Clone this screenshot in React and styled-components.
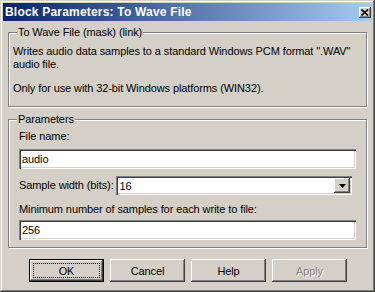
import React from 'react';
import { styled, createGlobalStyle } from 'styled-components';

const GlobalStyle = createGlobalStyle`
  * { box-sizing: border-box; }
  body {
    margin: 0;
    background: #d4d0c8;
  }
`;

const face = '#d4d0c8';
const raised = `inset -1px -1px #404040, inset 1px 1px #fff, inset -2px -2px #808080`;
const sunken = `inset 1px 1px #808080, inset 2px 2px #404040, inset -1px -1px #fff, inset -2px -2px ${face}`;

const Window = styled.div`
  width: 375px;
  height: 292px;
  padding: 3px;
  display: flex;
  flex-direction: column;
  background: ${face};
  box-shadow: inset -1px -1px #404040, inset 1px 1px ${face}, inset -2px -2px #808080, inset 2px 2px #fff;
  font: 11px 'Liberation Sans', Arial, sans-serif;
  letter-spacing: -0.1px;
  color: #000;
`;

const TitleBar = styled.div`
  height: 18px;
  display: flex;
  align-items: center;
  padding: 0 1px 0 2px;
  background: linear-gradient(to right, #0a246a, #a6caf0);
`;

const TitleText = styled.span`
  flex: 1;
  color: #fff;
  font-weight: bold;
  font-size: 12px;
  letter-spacing: 0.2px;
  white-space: nowrap;
`;

const CloseButton = styled.div`
  width: 12px;
  height: 11px;
  display: flex;
  align-items: center;
  justify-content: center;
  background: ${face};
  box-shadow: ${raised};
`;

const Content = styled.div`
  display: flex;
  flex-direction: column;
  padding: 0 5px;
`;

const Group = styled.div`
  position: relative;
  margin-top: ${(p) => p.$top}px;
  padding: ${(p) => p.$pad};
  border: 1px solid #808080;
  box-shadow: 1px 1px 0 #fff, inset 1px 1px 0 #fff;
`;

const GroupTitle = styled.span`
  position: absolute;
  top: -7px;
  left: 8px;
  padding: 0 1px;
  line-height: 13px;
  background: ${face};
`;

const Text = styled.p`
  margin: ${(p) => p.$mt || 0}px 0 0;
  line-height: 13px;
`;

const Label = styled.div`
  line-height: 13px;
  margin-top: ${(p) => p.$mt || 0}px;
  white-space: nowrap;
`;

const Field = styled.input`
  display: block;
  width: 100%;
  height: 20px;
  margin-top: ${(p) => p.$mt || 0}px;
  padding: 0 3px;
  border: none;
  outline: none;
  background: #fff;
  box-shadow: ${sunken};
  font: inherit;
  letter-spacing: inherit;
  color: #000;
`;

const SelectRow = styled.div`
  display: flex;
  align-items: center;
  gap: 2px;
  margin-top: 7px;
`;

const Select = styled.div`
  flex: 1;
  height: 19px;
  margin-right: 4px;
  display: flex;
  align-items: center;
  padding: 2px 2px 2px 4px;
  background: #fff;
  box-shadow: ${sunken};
`;

const SelectValue = styled.span`
  flex: 1;
`;

const ArrowButton = styled.div`
  width: 16px;
  height: 15px;
  display: flex;
  align-items: center;
  justify-content: center;
  background: ${face};
  box-shadow: ${raised};
`;

const ButtonRow = styled.div`
  display: flex;
  gap: 6px;
  margin-top: 11px;
  padding-left: 21px;
`;

const Button = styled.div`
  position: relative;
  width: 75px;
  height: 23px;
  display: flex;
  align-items: center;
  justify-content: center;
  background: ${face};
  box-shadow: ${(p) =>
    p.$default
      ? `inset 0 0 0 1px #000, inset -2px -2px #404040, inset 2px 2px #fff, inset -3px -3px #808080`
      : raised};
  color: ${(p) => (p.$disabled ? '#808080' : '#000')};
  text-shadow: ${(p) => (p.$disabled ? '1px 1px 0 #fff' : 'none')};

  &::after {
    content: '';
    display: ${(p) => (p.$default ? 'block' : 'none')};
    position: absolute;
    inset: 4px;
    border: 1px dotted #000;
  }
`;

function App() {
  return (
    <>
      <GlobalStyle />
      <Window>
        <TitleBar>
          <TitleText>Block Parameters: To Wave File</TitleText>
          <CloseButton>
            <svg width="8" height="7" viewBox="0 0 8 7">
              <path d="M0.5 0.5 L7 6.5 M7 0.5 L0.5 6.5" stroke="#000" strokeWidth="1.6" />
            </svg>
          </CloseButton>
        </TitleBar>
        <Content>
          <Group $top={11} $pad="12px 3px 11px 4px">
            <GroupTitle>To Wave File (mask) (link)</GroupTitle>
            <Text>
              Writes audio data samples to a standard Windows PCM format ".WAV" audio file.
            </Text>
            <Text $mt={11}>Only for use with 32-bit Windows platforms (WIN32).</Text>
          </Group>
          <Group $top={12} $pad="10px 10px 7px 10px">
            <GroupTitle>Parameters</GroupTitle>
            <Label>File name:</Label>
            <Field $mt={6} defaultValue="audio" readOnly />
            <SelectRow>
              <Label>Sample width (bits):</Label>
              <Select>
                <SelectValue>16</SelectValue>
                <ArrowButton>
                  <svg width="7" height="4" viewBox="0 0 7 4">
                    <path d="M0 0 H7 L3.5 4 Z" fill="#000" />
                  </svg>
                </ArrowButton>
              </Select>
            </SelectRow>
            <Label $mt={8}>Minimum number of samples for each write to file:</Label>
            <Field $mt={4} defaultValue="256" readOnly />
          </Group>
          <ButtonRow>
            <Button $default>OK</Button>
            <Button>Cancel</Button>
            <Button>Help</Button>
            <Button $disabled>Apply</Button>
          </ButtonRow>
        </Content>
      </Window>
    </>
  );
}

export default App;
